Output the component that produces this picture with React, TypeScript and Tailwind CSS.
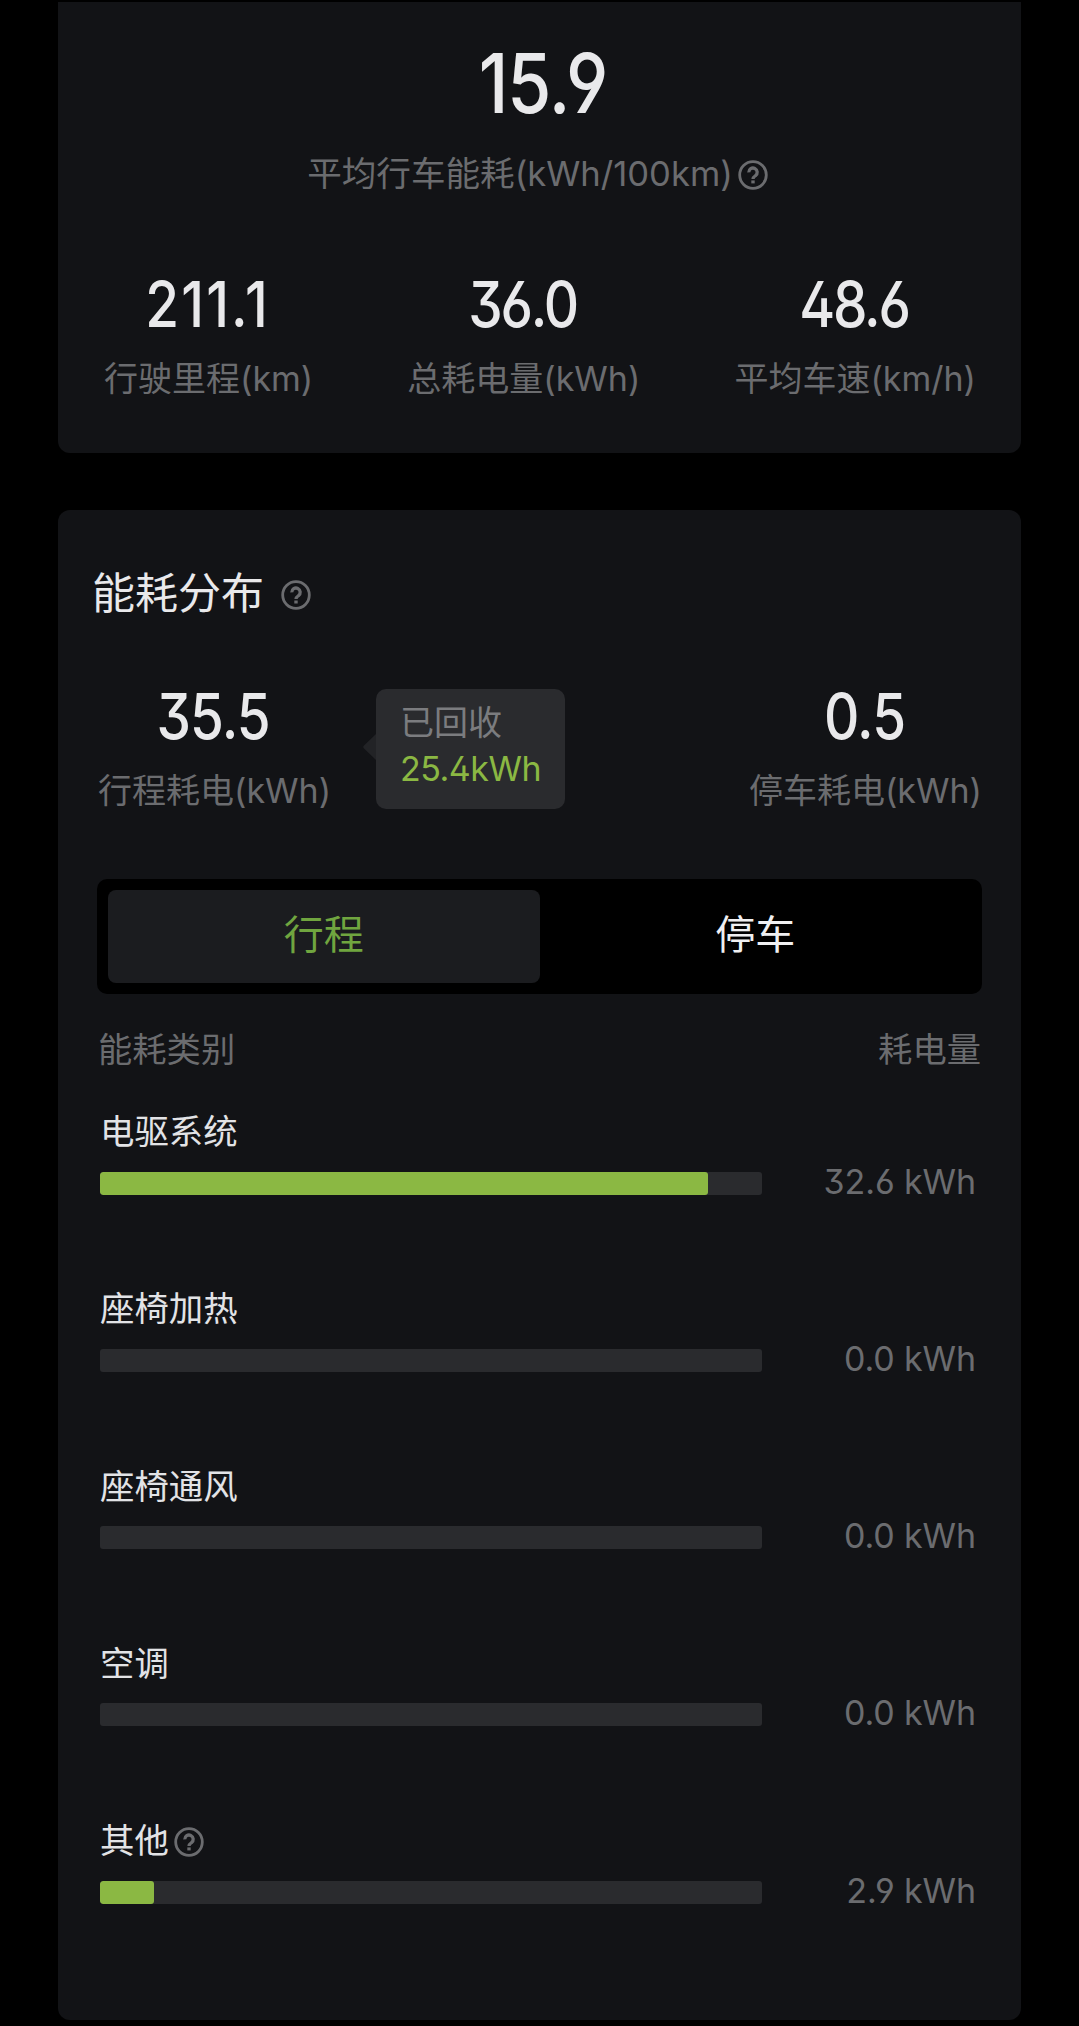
import React from 'react';
import clsx from 'clsx';

const TOTAL = 35.5;

const summary = [
	{ value: '211.1', label: '行驶里程(km)', valueClass: 'tracking-[2.5px] -ml-[2px]' },
	{ value: '36.0', label: '总耗电量(kWh)', valueClass: 'tracking-[-2.5px] -ml-[3px]' },
	{ value: '48.6', label: '平均车速(km/h)', valueClass: 'tracking-[-2.5px] -ml-[3px]' },
];

const categories = [
	{ name: '电驱系统', value: 32.6 },
	{ name: '座椅加热', value: 0 },
	{ name: '座椅通风', value: 0 },
	{ name: '空调', value: 0 },
	{ name: '其他', value: 2.9, help: true },
];

const HelpIcon = ({ className }: { className?: string }) => (
	<svg viewBox="0 0 30 30" fill="none" stroke="currentColor" className={clsx('size-[30px] shrink-0 text-[#6b6c6f]', className)}>
		<circle cx="15" cy="15" r="13.3" strokeWidth="2.8"/>
		<path d="M10.8 12.4a4.2 4.2 0 1 1 6.7 3.2c-1.7 1.2-2.5 1.7-2.5 3.4" strokeWidth="3.3"/>
		<path d="M13.3 20.4h3.4v3h-3.4z" fill="currentColor" stroke="none"/>
	</svg>
);

const Metric = ({ value, label, valueClass = 'tracking-[-1px] -ml-[2px]' }: { value: string; label: string; valueClass?: string }) => (
	<div className="flex flex-col items-center">
		<div className={clsx('h-[62px] origin-center scale-x-[0.87] text-[63px] leading-[62px] font-medium text-[#e9e9eb]', valueClass)}>{value}</div>
		<div className="mt-[22px] text-[34px] leading-[44px] whitespace-nowrap text-[#6b6c6f]">{label}</div>
	</div>
);

const CategoryRow = ({ name, value, help }: { name: string; value: number; help?: boolean }) => (
	<div className="h-[177.3px]">
		<div className="flex h-[44px] items-center gap-[5px]">
			<div className="text-[34.4px] leading-[44px] text-[#e2e3e6]">{name}</div>
			{help && <HelpIcon className="mt-[2px]"/>}
		</div>
		<div className="mt-[17px] flex h-[24px] items-center justify-between">
			<div className="h-[23px] w-[662px] overflow-hidden rounded-[3px] bg-[#2a2b2e]">
				<div className="h-full rounded-[3px] bg-[#8bb843]" style={{ width: `${(value / TOTAL) * 100}%` }}/>
			</div>
			<div className="-mt-[3px] text-[34px] leading-[24px] tracking-[-0.1px] whitespace-nowrap text-[#6b6c6f]">{value.toFixed(1)} kWh</div>
		</div>
	</div>
);

const App = () => {
	return (
		<div className="flex h-[2026px] w-[1079px] flex-col bg-black px-[58px] pt-[2px] font-['Inter','Noto_Sans_CJK_SC',sans-serif] [font-feature-settings:'ss01','cv03','cv04','cv09']">
			{/* trip summary */}
			<div className="h-[451px] rounded-b-[12px] bg-[#121316] px-[46px] pt-[42px]">
				<div className="pl-[7px] text-center">
					<div className="scale-x-[0.87] text-[82px] leading-[80px] font-medium tracking-[-1px] text-[#e9e9eb]">15.9</div>
				</div>
				<div className="mt-[27px] flex items-center justify-center gap-[5px] pr-[4px]">
					<div className="text-[34.6px] leading-[44px] text-[#6b6c6f]">平均行车能耗(kWh/100km)</div>
					<HelpIcon className="mt-1"/>
				</div>
				<div className="mt-[78px] -mr-px flex justify-between">
					{summary.map((item) => (
						<Metric key={item.label} {...item}/>
					))}
				</div>
			</div>

			{/* consumption breakdown */}
			<div className="mt-[57px] h-[1510px] rounded-[12px] bg-[#121316] px-[39px] pt-[56px]">
				<div className="-ml-[5px] flex items-center gap-[17px]">
					<h1 className="text-[43px] leading-[54px] text-[#e9e9eb]">能耗分布</h1>
					<HelpIcon className="mt-1"/>
				</div>

				<div className="mt-[65px] flex justify-between pl-px">
					<div className="flex">
						<Metric value="35.5" label="行程耗电(kWh)"/>
						<div className="relative mt-[4px] ml-[45px] h-[120px] w-[189px] rounded-[10px] bg-[#2a2b2e] pt-[11px] pl-[24px]">
							<svg viewBox="0 0 13 26" className="absolute top-[45px] -left-[13px] h-[26px] w-[13px]">
								<path d="M13 0v26L1 14.5Q-.5 13 1 11.5z" fill="#222326"/>
							</svg>
							<div className="text-[34px] leading-[46px] text-[#7b7c7f]">已回收</div>
							<div className="text-[34px] leading-[46px] tracking-[-0.5px] text-[#8bb843]">25.4kWh</div>
						</div>
					</div>
					<Metric value="0.5" label="停车耗电(kWh)"/>
				</div>

				<div className="mt-[66px] flex h-[115px] rounded-[10px] bg-black p-[11px] text-[40px]">
					<button className="flex-1 rounded-[8px] bg-[#1b1c1f] pb-[4px] text-[#70a53f]">行程</button>
					<button className="flex-1 pb-[4px] text-[#f0f0f2]">停车</button>
				</div>

				<div className="mt-[34px] flex justify-between pr-px pl-px text-[34.3px] leading-[44px] text-[#6b6c6f]">
					<div>能耗类别</div>
					<div>耗电量</div>
				</div>

				<div className="mt-[38px] pr-[6px] pl-[3px]">
					{categories.map((item) => (
						<CategoryRow key={item.name} {...item}/>
					))}
				</div>
			</div>
		</div>
	);
};

export default App;
